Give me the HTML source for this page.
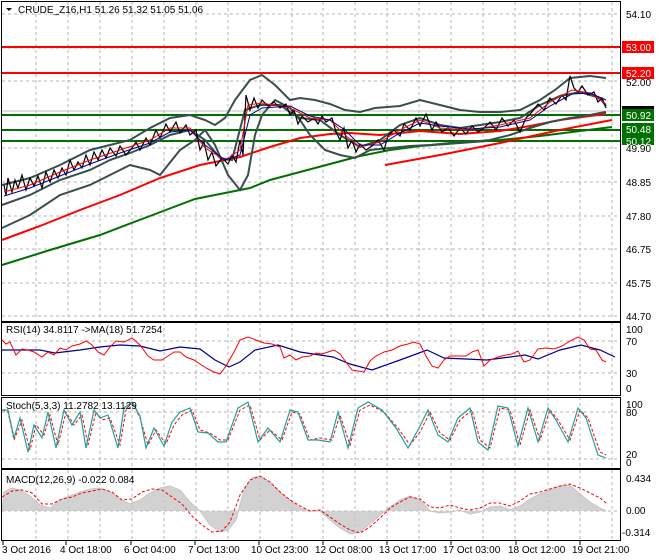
<!DOCTYPE html>
<html><head><meta charset="utf-8"><style>
html,body{margin:0;padding:0;background:#fff;}
svg{display:block;font-family:"Liberation Sans",sans-serif;font-size:10px;}
</style></head><body>
<svg width="660" height="560" viewBox="0 0 660 560" xmlns="http://www.w3.org/2000/svg">
<rect width="660" height="560" fill="#fff"/>
<g stroke="#b4b4b4" stroke-dasharray="3,3" stroke-width="1" fill="none">
<path d="M36 2V320M68 2V320M100 2V320M132 2V320M164 2V320M196 2V320M228 2V320M260 2V320M292 2V320M323 2V320M355 2V320M387 2V320M419 2V320M451 2V320M483 2V320M515 2V320M548 2V320M580 2V320M612 2V320"/>
<path d="M36 322V395M68 322V395M100 322V395M132 322V395M164 322V395M196 322V395M228 322V395M260 322V395M292 322V395M323 322V395M355 322V395M387 322V395M419 322V395M451 322V395M483 322V395M515 322V395M548 322V395M580 322V395M612 322V395"/>
<path d="M36 397V468M68 397V468M100 397V468M132 397V468M164 397V468M196 397V468M228 397V468M260 397V468M292 397V468M323 397V468M355 397V468M387 397V468M419 397V468M451 397V468M483 397V468M515 397V468M548 397V468M580 397V468M612 397V468"/>
<path d="M36 470V539M68 470V539M100 470V539M132 470V539M164 470V539M196 470V539M228 470V539M260 470V539M292 470V539M323 470V539M355 470V539M387 470V539M419 470V539M451 470V539M483 470V539M515 470V539M548 470V539M580 470V539M612 470V539"/>
<path d="M2 14H620M2 48H620M2 81H620M2 148H620M2 182H620M2 216H620M2 249H620M2 283H620M2 316H620"/>
<path d="M2 341H620M2 373H620M2 412H620M2 459H620M2 511H620"/>
</g>
<line x1="2" y1="111" x2="620" y2="111" stroke="#c0c0c0"/>
<g stroke-width="2">
<line x1="2" y1="47" x2="620" y2="47" stroke="#ff0000"/>
<line x1="2" y1="73" x2="620" y2="73" stroke="#ff0000"/>
<line x1="2" y1="115" x2="620" y2="115" stroke="#007000"/>
<line x1="2" y1="130" x2="620" y2="130" stroke="#007000"/>
<line x1="2" y1="141" x2="620" y2="141" stroke="#007000"/>
</g>
<polyline fill="none" stroke="#007000" stroke-width="2" points="2,265 50,250 100,235 150,216 195,199 230,192 250,188 270,180 300,172 330,164 360,156 390,150 420,146 460,143 500,140 540,136 580,131 612,127"/>
<polyline fill="none" stroke="#ff0000" stroke-width="2" points="2,240 40,226 80,210 120,195 160,178 200,165 240,157 270,147 300,138 330,134 350,133 380,135 420,131 460,134 500,131 530,126 560,120 590,116 606,114"/>
<polyline fill="none" stroke="#ff0000" stroke-width="2" points="385,165 440,155 500,143 560,130 612,120"/>
<g fill="none" stroke="#3a4e4e" stroke-width="2">
<polyline points="2,185 30,178 60,165 90,150 110,145 130,140 150,128 170,118 190,115 205,120 215,125 225,118 235,100 250,80 262,75 275,85 290,100 300,98 315,100 330,104 345,110 360,112 375,108 400,106 420,100 440,105 460,110 480,112 500,112 520,110 540,100 555,90 570,78 590,76 606,78"/>
<polyline points="2,228 30,215 60,195 90,185 110,175 130,165 150,170 160,175 180,150 195,140 205,130 215,145 228,175 240,190 248,175 255,135 262,115 275,100 290,108 300,120 310,135 325,150 340,155 355,158 370,150 390,148 410,146 430,145 450,143 470,142 490,140 510,135 530,128 550,122 570,118 590,115 600,113 606,112"/>
<polyline points="2,205 30,195 60,180 90,170 110,160 130,153 150,145 170,135 190,130 205,140 220,158 232,160 245,110 260,105 280,105 290,112 300,118 320,120 340,135 360,147 380,140 400,125 420,118 440,125 460,128 480,125 500,122 520,118 540,105 560,96 580,92 600,98 606,106"/>
</g>
<polyline fill="none" stroke="#000" stroke-width="1.2" points="4,185 6,195 8,178 12,192 15,180 18,188 22,175 26,190 30,178 34,186 38,176 42,188 46,172 50,182 54,170 58,178 62,168 66,175 70,160 74,170 78,162 82,168 86,155 90,165 94,152 98,160 102,150 106,158 110,148 116,156 120,146 126,155 132,148 136,142 140,150 146,138 150,145 156,130 160,138 166,124 170,132 176,122 180,133 186,125 190,135 196,130 200,150 204,142 208,160 212,152 216,166 222,158 228,164 232,155 236,162 240,140 243,155 246,95 250,110 254,98 258,108 262,100 268,106 274,102 280,108 286,104 290,115 294,110 298,124 302,116 308,122 314,118 318,124 322,116 326,122 332,118 336,132 340,140 344,128 348,148 352,140 356,152 360,144 366,150 372,146 378,140 384,150 388,136 394,130 400,136 404,124 410,130 416,118 420,126 426,114 432,130 436,122 442,132 448,128 454,136 460,128 466,134 472,126 478,132 484,128 490,122 496,130 502,118 508,126 514,120 520,132 526,118 532,112 538,104 544,110 550,98 556,104 562,95 566,100 570,76 574,88 578,92 582,86 588,95 594,92 598,102 602,98 606,108"/>
<polyline fill="none" stroke="#ff0000" stroke-width="1" points="4,192 30,185 60,172 90,160 120,150 150,140 170,128 190,128 205,148 225,160 240,150 248,105 262,103 290,108 310,118 330,120 345,135 360,147 380,142 400,130 420,120 440,128 470,130 500,125 530,118 550,102 572,90 590,93 606,104"/>
<polyline fill="none" stroke="#00008b" stroke-width="1" points="4,196 30,188 60,176 90,164 120,153 150,143 170,132 190,130 205,145 225,160 240,155 250,115 262,108 290,106 310,116 330,120 345,130 360,145 380,145 400,133 420,123 440,126 470,129 500,127 530,120 550,106 572,94 590,93 606,100"/>
<g fill="#000">
<text x="626" y="18">54.10</text><text x="626" y="86">52.00</text><text x="626" y="152">49.90</text>
<text x="626" y="186">48.85</text><text x="626" y="220">47.80</text><text x="626" y="253">46.75</text>
<text x="626" y="287">45.75</text><text x="626" y="320">44.70</text>
</g>
<rect x="622" y="41" width="32" height="12" fill="#ff0000"/><text x="626" y="51" fill="#fff">53.00</text>
<rect x="622" y="67" width="32" height="12" fill="#ff0000"/><text x="626" y="77" fill="#fff">52.20</text>
<rect x="622" y="106" width="32" height="5" fill="#000"/>
<rect x="622" y="109" width="32" height="12" fill="#007000"/><text x="626" y="119" fill="#fff">50.92</text>
<rect x="622" y="123" width="32" height="22" fill="#007000"/><text x="626" y="133" fill="#fff">50.48</text><text x="626" y="145" fill="#fff">50.12</text>
<path d="M6 8L12 8L9 11Z" fill="#000"/>
<text x="18" y="13" fill="#000">CRUDE_Z16,H1  51.26 51.32 51.05 51.06</text>
<!-- RSI -->
<polyline fill="none" stroke="#00008b" stroke-width="1.2" points="2,350 20,350 40,350 55,353 80,350 100,347 120,345 140,346 160,351 180,347 200,349 215,360 229,367 240,362 255,350 278,345 300,352 333,357 350,364 372,370 400,360 427,350 444,358 487,360 525,355 538,359 560,350 581,345 600,350 615,357"/>
<polyline fill="none" stroke="#ff0000" stroke-width="1" points="2,340 6,344 10,342 16,355 22,349 28,350 34,352 42,357 48,352 54,355 60,348 66,350 72,346 80,344 86,341 92,345 98,352 104,355 110,347 116,341 124,342 132,338 140,345 148,356 154,360 162,360 168,356 174,352 180,352 186,357 194,360 200,364 206,368 214,372 220,374 226,366 234,352 240,340 248,337 256,340 264,343 272,344 280,347 284,358 290,355 296,360 302,357 310,356 316,353 322,354 328,352 334,350 340,354 346,362 352,370 358,371 364,372 370,361 376,356 384,352 392,350 400,346 408,344 414,342 420,344 426,356 432,366 438,368 444,360 450,356 458,356 466,356 472,352 478,350 484,366 490,360 498,357 506,355 512,354 518,351 524,362 530,360 538,349 546,348 554,349 562,346 570,341 578,337 584,340 590,349 596,350 602,360 606,362"/>
<g fill="#000"><text x="626" y="333">100</text><text x="626" y="345">70</text><text x="626" y="377">30</text><text x="626" y="392">0</text></g>
<text x="6" y="333" fill="#000">RSI(14) 34.8117   -&gt;MA(18) 51.7254</text>
<!-- Stoch -->
<polyline fill="none" stroke="#ff0000" stroke-width="1" stroke-dasharray="3,2" points="2,410 8,412 14,440 22,420 30,450 36,425 44,435 50,415 58,445 66,412 74,425 82,415 88,445 96,412 102,420 110,418 120,445 126,410 134,405 140,418 148,445 156,430 166,444 174,425 182,415 192,410 200,430 210,433 220,440 228,440 240,410 250,405 260,440 270,430 282,440 292,412 300,414 310,440 320,438 332,440 340,415 350,445 360,410 370,405 384,412 398,428 410,445 420,432 430,412 440,433 450,440 460,420 472,410 480,440 490,448 500,408 510,410 520,445 530,410 540,440 550,410 558,420 570,440 580,410 588,418 600,452 606,455"/>
<polyline fill="none" stroke="#20a0a0" stroke-width="1.2" points="2,410 8,410 14,438 20,418 28,452 34,425 42,438 48,412 56,448 64,410 72,425 80,412 86,448 94,410 100,418 108,415 118,448 124,408 132,402 140,416 146,448 154,428 164,446 172,422 180,412 190,408 198,432 208,433 218,442 226,442 238,408 248,402 258,442 268,428 280,442 290,410 298,412 308,440 318,440 330,442 338,412 348,448 358,408 368,402 382,410 396,428 408,448 418,430 428,410 438,435 448,442 458,418 470,408 478,442 488,450 498,406 508,408 518,446 528,408 538,442 548,408 556,420 568,442 578,408 586,418 598,455 606,458"/>
<g fill="#000"><text x="626" y="408">100</text><text x="626" y="416">80</text><text x="626" y="458">20</text><text x="626" y="466">0</text></g>
<text x="6" y="409" fill="#000">Stoch(5,3,3) 11.2782 13.1129</text>
<!-- MACD -->
<polyline fill="#c8c8c8" stroke="#b8b8b8" stroke-width="1" opacity="0.8" points="2,511 4,492 12,488 20,490 30,496 40,505 50,508 60,500 70,496 80,492 90,489 100,488 110,492 120,499 130,504 140,500 150,493 160,488 170,486 180,490 190,502 200,511 210,525 220,532 228,530 236,520 244,490 252,478 260,476 270,482 280,492 290,500 300,508 310,511 320,511 330,520 340,528 350,534 360,532 370,524 380,515 390,507 400,500 410,496 420,500 430,511 440,513 450,512 460,510 470,514 480,512 490,507 500,506 510,510 520,506 530,499 540,494 550,490 560,486 570,485 580,494 590,502 600,508 606,511"/>
<polyline fill="none" stroke="#ff0000" stroke-width="1" stroke-dasharray="3,2" points="2,497 12,491 22,490 32,493 42,504 52,504 62,499 72,497 82,493 92,491 102,489 112,492 122,500 132,499 142,492 152,489 162,490 172,497 182,504 192,516 202,525 212,532 222,531 230,522 240,495 250,480 260,476 270,482 280,492 290,500 300,506 310,511 320,510 330,517 340,524 350,530 360,533 370,527 380,518 390,508 400,502 410,497 420,499 430,507 440,508 450,505 460,508 470,510 480,508 490,503 500,503 510,506 520,501 530,494 540,492 550,489 560,486 570,484 580,488 590,493 600,498 606,503"/>
<g fill="#000"><text x="626" y="482">0.434</text><text x="626" y="514">0.00</text><text x="622" y="536">-0.314</text></g>
<text x="6" y="483" fill="#000">MACD(12,26,9) -0.022 0.084</text>
<g fill="none" stroke="#000" stroke-width="1">
<rect x="1.5" y="1.5" width="619" height="320"/>
<rect x="1.5" y="322.5" width="619" height="73"/>
<rect x="1.5" y="397.5" width="619" height="71"/>
<rect x="1.5" y="469.5" width="619" height="71"/>
</g>
<g stroke="#000"><path d="M3 541V545M66 541V545M131 541V545M195 541V545M259 541V545M323 541V545M387 541V545M451 541V545M516 541V545M580 541V545"/></g>
<g fill="#000">
<text x="2" y="553">3 Oct 2016</text><text x="60" y="553">4 Oct 18:00</text><text x="124" y="553">6 Oct 04:00</text>
<text x="188" y="553">7 Oct 13:00</text><text x="251" y="553">10 Oct 23:00</text><text x="315" y="553">12 Oct 08:00</text>
<text x="379" y="553">13 Oct 17:00</text><text x="443" y="553">17 Oct 03:00</text><text x="508" y="553">18 Oct 12:00</text>
<text x="572" y="553">19 Oct 21:00</text>
</g>
</svg>
</body></html>
